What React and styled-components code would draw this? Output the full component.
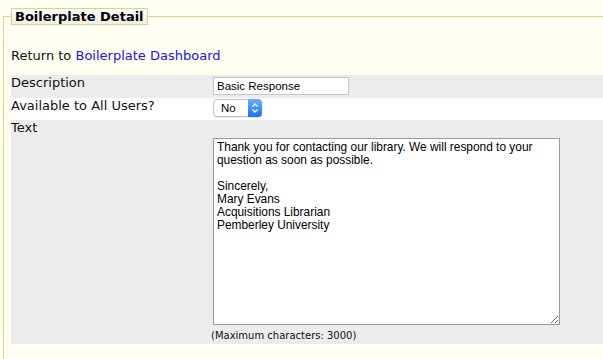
import React, { useState } from "react";
import styled, { createGlobalStyle } from "styled-components";

const GlobalStyle = createGlobalStyle`
  html, body {
    margin: 0;
    padding: 0;
    background: #fefef1;
    overflow: hidden;
  }
  body {
    font-family: "DejaVu Sans", Verdana, sans-serif;
    font-size: 13px;
    color: #111;
  }
`;

const Fieldset = styled.fieldset`
  margin: 8px 0 0 3px;
  padding: 0 0 40px 7px;
  width: 640px;
  border: 1px solid #ddd18b;
  border-right: none;
  min-inline-size: auto;
`;

const Legend = styled.legend`
  margin: 0;
  padding: 0 3px;
  height: 15px;
  line-height: 15px;
  font-size: 13px;
  font-weight: bold;
  color: #000;
  border: 1px solid #ddd18b;
  background: linear-gradient(#fdfdf9, #efefe9);
`;

const ReturnLine = styled.p`
  margin: 23px 0 11px;
  line-height: 16px;
`;

const Link = styled.a`
  color: #2112ee;
  text-decoration: none;
`;

const Row = styled.div`
  display: grid;
  grid-template-columns: 200px 1fr;
  background: ${(p) => (p.$shaded ? "#ececec" : "#ffffff")};
`;

const Label = styled.div`
  line-height: 16px;
`;

const Field = styled.div`
  padding: ${(p) => p.$pad || "0"};
`;

const TextInput = styled.input`
  display: block;
  box-sizing: border-box;
  margin: 0 0 0 2px;
  width: 136px;
  height: 18px;
  padding: 0 3px;
  border: 1px solid #c6c6c6;
  background: #fff;
  font-family: "Liberation Sans", Arial, sans-serif;
  font-size: 11.5px;
  color: #000;
  outline: none;
`;

const SelectWrap = styled.div`
  position: relative;
  margin-left: 2px;
  width: 49px;
  height: 18px;
`;

const Select = styled.select`
  appearance: none;
  box-sizing: border-box;
  width: 49px;
  height: 18px;
  margin: 0;
  padding: 0 0 0 7px;
  border: 1px solid #c2c2c2;
  border-radius: 4px;
  background: #fff;
  box-shadow: 0 1px 1px rgba(0, 0, 0, 0.08);
  font-family: "Liberation Sans", Arial, sans-serif;
  font-size: 11.5px;
  color: #000;
  outline: none;
`;

const Stepper = styled.span`
  position: absolute;
  top: 0;
  right: 0;
  width: 14px;
  height: 18px;
  border-radius: 0 4px 4px 0;
  background: linear-gradient(#69b1fb, #1a72f2);
  display: flex;
  align-items: center;
  justify-content: center;
  pointer-events: none;
`;

const TextArea = styled.textarea`
  display: block;
  box-sizing: border-box;
  margin: 0 0 0 2px;
  width: 347px;
  height: 187px;
  padding: 2px 3px;
  border: 1px solid #9a9a9a;
  background: #fff;
  font-family: "Liberation Sans", Arial, sans-serif;
  font-size: 11.9px;
  line-height: 13px;
  color: #000;
  outline: none;
`;

const Note = styled.div`
  margin-top: 4px;
  font-size: 10px;
  line-height: 13px;
`;

const Chevrons = () => (
  <svg width="8" height="12" viewBox="0 0 8 12" fill="none">
    <path d="M1.5 4.5 L4 2 L6.5 4.5" stroke="#fff" strokeWidth="1.4" />
    <path d="M1.5 7.5 L4 10 L6.5 7.5" stroke="#fff" strokeWidth="1.4" />
  </svg>
);

const initialText = `Thank you for contacting our library. We will respond to your question as soon as possible.

Sincerely,
Mary Evans
Acquisitions Librarian
Pemberley University`;

export default function App() {
  const [desc, setDesc] = useState("Basic Response");
  const [avail, setAvail] = useState("No");
  const [text, setText] = useState(initialText);

  return (
    <>
      <GlobalStyle />
      <Fieldset>
        <Legend>Boilerplate Detail</Legend>
        <ReturnLine>
          Return to <Link href="#">Boilerplate Dashboard</Link>
        </ReturnLine>

        <Row $shaded>
          <Label>Description</Label>
          <Field $pad="2px 0 3px">
            <TextInput value={desc} onChange={(e) => setDesc(e.target.value)} />
          </Field>
        </Row>

        <Row>
          <Label>Available to All Users?</Label>
          <Field $pad="1px 0 3px">
            <SelectWrap>
              <Select value={avail} onChange={(e) => setAvail(e.target.value)}>
                <option>No</option>
                <option>Yes</option>
              </Select>
              <Stepper>
                <Chevrons />
              </Stepper>
            </SelectWrap>
          </Field>
        </Row>

        <Row $shaded>
          <Label>Text</Label>
          <Field $pad="18px 0 2px">
            <TextArea value={text} onChange={(e) => setText(e.target.value)} />
            <Note>(Maximum characters: 3000)</Note>
          </Field>
        </Row>
      </Fieldset>
    </>
  );
}
